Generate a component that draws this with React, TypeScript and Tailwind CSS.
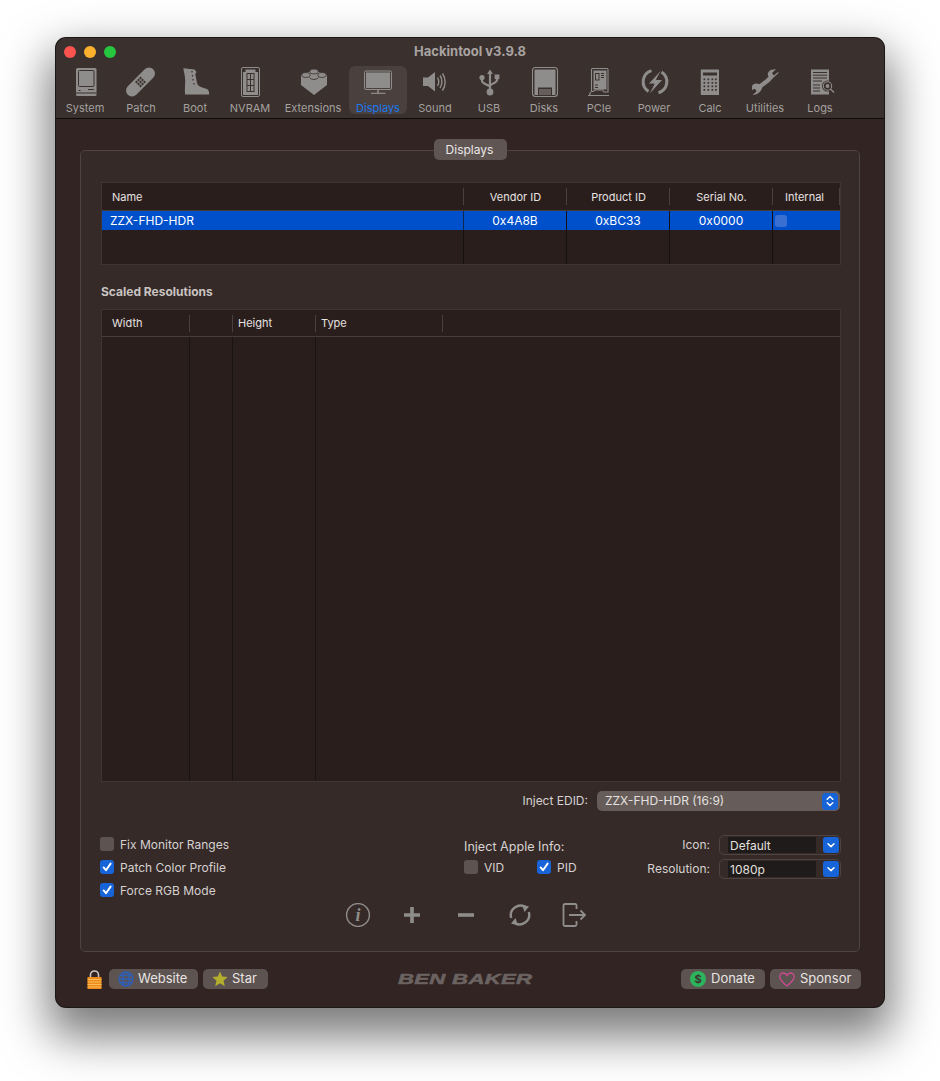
import React from "react";

const G = "#8f8d8c";
const D = "#3a302e";

function Ico({ cx, children }: { cx: number; children: React.ReactNode }) {
  return (
    <svg width="48" height="36" viewBox={`${cx - 24} 66 48 36`} className="block shrink-0" fill={G}>
      {children}
    </svg>
  );
}

const icons: Record<string, React.ReactNode> = {
  System: (
    <>
      <rect x="76" y="68" width="20.5" height="28" rx="1.5" />
      <rect x="78.5" y="70.5" width="15.5" height="16" rx="1" fill={G} stroke={D} strokeWidth="1" />
      <rect x="76" y="92.5" width="20.5" height="1" fill={D} />
      <rect x="78.5" y="90" width="2" height="1" fill={D} />
      <rect x="88" y="89" width="6" height="1" fill={D} />
    </>
  ),
  Patch: (
    <>
      <rect x="122.5" y="76" width="36" height="12" rx="6" transform="rotate(-45 140.5 82)" />
      <g fill={D}>
        <rect x="139.5" y="77" width="2" height="2" transform="rotate(45 140.5 78)" />
        <rect x="139.5" y="81" width="2" height="2" transform="rotate(45 140.5 82)" />
        <rect x="139.5" y="85" width="2" height="2" transform="rotate(45 140.5 86)" />
        <rect x="135.5" y="81" width="2" height="2" transform="rotate(45 136.5 82)" />
        <rect x="143.5" y="81" width="2" height="2" transform="rotate(45 144.5 82)" />
        <rect x="137.5" y="79" width="2" height="2" transform="rotate(45 138.5 80)" />
        <rect x="141.5" y="79" width="2" height="2" transform="rotate(45 142.5 80)" />
        <rect x="137.5" y="83" width="2" height="2" transform="rotate(45 138.5 84)" />
        <rect x="141.5" y="83" width="2" height="2" transform="rotate(45 142.5 84)" />
      </g>
    </>
  ),
  Boot: (
    <>
      <path d="M183.3 68.3 L194.5 69.5 L196.5 72 L195.3 74 L197 83 C198 87 203 87.5 207 89 C208.8 90 209.2 92 209.2 94.5 L185 94.5 C184.6 88 185.4 84 185.2 80 C185 75 183.8 72 183.3 68.3Z" />
      <path d="M192 71 V72.5 M192.5 75 V76.5 M193 79 V80.5 M194 83 V84.5" stroke={D} strokeWidth="1.2" fill="none" />
    </>
  ),
  NVRAM: (
    <>
      <rect x="241.5" y="67.5" width="18" height="29" rx="1.5" fill="none" stroke={G} strokeWidth="1" />
      <path d="M243 72 L245.5 72 L245.5 69.5 L255.5 69.5 L255.5 72 L258 72 L258 95 L243 95Z" />
      <rect x="246.5" y="73" width="8" height="19" fill={D} />
      <rect x="247.5" y="74" width="2.5" height="5" />
      <rect x="251" y="74" width="2.5" height="5" />
      <rect x="247.5" y="80" width="2.5" height="5" />
      <rect x="251" y="80" width="2.5" height="5" />
      <rect x="247.5" y="86" width="2.5" height="5" />
      <rect x="251" y="86" width="2.5" height="5" />
    </>
  ),
  Extensions: (
    <>
      <path d="M301 75 L314 70 L327 75 V85 L314 95 L301 85Z" />
      <g stroke={D} strokeWidth="0.8">
        <ellipse cx="314" cy="71.5" rx="4.2" ry="2.4" />
        <ellipse cx="306" cy="75" rx="4.2" ry="2.4" />
        <ellipse cx="322" cy="75" rx="4.2" ry="2.4" />
      </g>
      <path d="M309.5 77.5 C311 80 317 80 318.5 77.5" fill="none" stroke={D} strokeWidth="0.9" />
    </>
  ),
  Displays: (
    <>
      <rect x="364.5" y="71" width="27" height="18.5" rx="1.5" fill="none" stroke={G} strokeWidth="1" />
      <rect x="366" y="72.5" width="24" height="15.5" />
      <rect x="377.3" y="89.5" width="1.6" height="4" />
      <rect x="371" y="92.7" width="14.5" height="1.2" />
    </>
  ),
  Sound: (
    <>
      <path d="M423 77.5 H428 L435 72 V91.5 L428 86 H423Z" />
      <g fill="none" stroke={G} strokeWidth="1.4">
        <path d="M437.5 77.5 C439 80 439 83.5 437.5 86" />
        <path d="M440 75.5 C442.5 79 442.5 84.5 440 88" />
        <path d="M442.5 73.5 C446 78.5 446 85.5 442.5 90.5" />
      </g>
    </>
  ),
  USB: (
    <>
      <path d="M490 72 V90 M482 79 V81 C482 84 490 85 490 87 M497 78 V80 C497 83 490 84 490 86" fill="none" stroke={G} strokeWidth="2.2" />
      <path d="M490 69.5 L493 74 H487Z" />
      <circle cx="482" cy="77.5" r="2.6" />
      <rect x="494.6" y="74.5" width="4.8" height="4.6" />
      <circle cx="490" cy="92" r="3.4" />
    </>
  ),
  Disks: (
    <>
      <rect x="532.5" y="67.5" width="25" height="29" rx="3" fill="none" stroke={G} strokeWidth="1.1" />
      <path d="M534.5 70.5 Q534.5 69.5 535.5 69.5 H554.5 Q555.5 69.5 555.5 70.5 V95 H534.5Z" />
      <rect x="538" y="87.5" width="14" height="7.5" fill={D} />
      <path d="M540 89 V95 M542 89 V95 M544 89 V95 M546 89 V95 M548 89 V95 M550 89 V95" stroke={G} strokeWidth="1" fill="none" />
    </>
  ),
  PCIe: (
    <>
      <path d="M592.5 68.5 H607 Q608 68.5 608 69.5 V92 H604 L602.5 90 H595 L593 91.5 H591.5 V69.5 Q591.5 68.5 592.5 68.5Z" fill="none" stroke={G} strokeWidth="1.1" />
      <rect x="593.5" y="70.5" width="13" height="19" />
      <rect x="595" y="73" width="4.5" height="7.5" fill={D} />
      <rect x="596" y="74" width="2.5" height="5.5" />
      <path d="M601 73.5 H604 M601 75.5 H604 M601 77.5 H604 M595 85 H598 M595 87.5 H598" stroke={D} strokeWidth="1" fill="none" />
      <path d="M588 95.5 H609" stroke={G} strokeWidth="1.2" fill="none" />
      <path d="M590.5 92 L589.5 95.5" stroke={G} strokeWidth="1.2" fill="none" />
    </>
  ),
  Power: (
    <>
      <path d="M651.5 70.6 A11.6 11.6 0 0 0 648.5 91.5 M658.5 92.8 A11.6 11.6 0 0 0 661.5 71.9" fill="none" stroke={G} strokeWidth="3" />
      <path d="M662.5 68.5 L648 84 H654 L648.5 95.5 L663 79.5 H656.5Z" stroke={D} strokeWidth="1" />
    </>
  ),
  Calc: (
    <>
      <rect x="700.8" y="69.5" width="18.2" height="25.5" rx="0.5" />
      <rect x="703" y="72.5" width="14" height="3" fill={D} />
      <g fill={D}>
        {[78.5, 82, 85.5, 89].map((y) =>
          [703.5, 707.5, 711.5, 715].map((x) => <rect key={`${x}-${y}`} x={x} y={y} width="1.7" height="1.7" />)
        )}
      </g>
    </>
  ),
  Utilities: (
    <>
      <path d="M756 90 C761 84 766 84 771 77" fill="none" stroke={G} strokeWidth="4.4" />
      <path d="M778.6 73 L772.5 78.5 L768 76 C767 72 770 69 776 69.3 L772 73 L773.8 75.6 L778 72Z" />
      <path d="M752 86 C754 83 757 83 760 84.5 L762 88 C761 92 757 95 752.5 95 L756.5 91.5 L755.5 88.5 L752 90Z" />
    </>
  ),
  Logs: (
    <>
      <rect x="811" y="69.5" width="18" height="25" />
      <path d="M813 72.5 H827 M813 75.2 H827 M813 78 H827 M813 81 H822 M813 85 H820 M813 88 H820 M813 91 H820" stroke={D} strokeWidth="1" fill="none" />
      <circle cx="827.5" cy="86" r="5.5" fill={D} />
      <circle cx="827.5" cy="86" r="4.2" fill="none" stroke={G} strokeWidth="1.1" />
      <circle cx="827.5" cy="86" r="1.9" />
      <path d="M830.7 89.2 L834 92.5" stroke={G} strokeWidth="1.4" fill="none" />
    </>
  ),
};

const toolbar: [string, number, number][] = [
  ["System", 85, 54],
  ["Patch", 141, 58],
  ["Boot", 195, 50],
  ["NVRAM", 250, 60],
  ["Extensions", 313, 66],
  ["Displays", 378, 58],
  ["Sound", 435, 56],
  ["USB", 489, 52],
  ["Disks", 544, 58],
  ["PCIe", 599, 52],
  ["Power", 654, 58],
  ["Calc", 710, 54],
  ["Utilities", 765, 56],
  ["Logs", 820, 54],
];

function Check({ on }: { on?: boolean }) {
  return (
    <span className={`flex h-[14px] w-[14px] shrink-0 items-center justify-center rounded-[3px] ${on ? "bg-[#1763d8]" : "bg-[#5d5452]"}`}>
      {on && (
        <svg width="12" height="12" viewBox="0 0 12 12" fill="none">
          <path d="M2.6 6.4 L5 9.2 L9.6 2.6" stroke="#fff" strokeWidth="1.9" strokeLinecap="round" strokeLinejoin="round" />
        </svg>
      )}
    </span>
  );
}

function CheckRow({ label, on }: { label: string; on?: boolean }) {
  return (
    <div className="flex h-[14px] items-center gap-[6px]">
      <Check on={on} />
      <span className="pt-[2px] text-[12px] leading-none text-[#d6d1d0]">{label}</span>
    </div>
  );
}

function Combo({ label, value }: { label: string; value: string }) {
  return (
    <div className="flex h-[20px] items-center justify-end">
      <span className="mr-[9px] text-[12px] text-[#d6d1d0]">{label}</span>
      <div className="flex h-[20px] w-[122px] items-center rounded-[5px] border border-[#4d4341] pl-[8px] pr-[1px]">
        <div className="flex h-[16px] w-[88px] items-center bg-[#1e1b1a] pl-[2px] pt-[1px] text-[12px] text-[#e4e0df]">{value}</div>
        <div className="ml-[7px] flex h-[16px] w-[16px] items-center justify-center rounded-[3px] bg-[#1763d8]">
          <svg width="10" height="10" viewBox="0 0 10 10" fill="none">
            <path d="M2 3.8 L5 6.6 L8 3.8" stroke="#fff" strokeWidth="1.5" strokeLinecap="round" strokeLinejoin="round" />
          </svg>
        </div>
      </div>
    </div>
  );
}

function Head({ w, children, left, noSep }: { w: string; children?: React.ReactNode; left?: boolean; noSep?: boolean }) {
  return (
    <div className={`relative flex h-full shrink-0 items-center ${w} ${left ? "pl-[10px]" : "justify-center"} text-[11px] text-[#e6e2e1]`}>
      {children}
      {!noSep && <span className="absolute right-0 top-[5px] h-[17px] w-px bg-[#4a403e]" />}
    </div>
  );
}

function Cell({ w, children }: { w: string; children?: React.ReactNode }) {
  return <div className={`flex h-full shrink-0 items-center justify-center border-r border-[#141110] ${w} text-[12px] text-white`}>{children}</div>;
}

function Pill({ w, icon, label, tight }: { w: string; icon: React.ReactNode; label: string; tight?: boolean }) {
  return (
    <button className={`flex h-[20px] ${w} items-center rounded-[5px] bg-[#5d5351] pl-[9px] text-[13px] text-[#e8e4e3]`}>
      <span className={`${tight ? "mr-[4px]" : "mr-[5px]"} flex h-[16px] w-[16px] items-center justify-center`}>{icon}</span>
      {label}
    </button>
  );
}

export default function App() {
  return (
    <div className="h-[1081px] overflow-hidden bg-white pl-[56px] pt-[38px] font-[Inter,sans-serif]">
      <div className="h-[969px] w-[828px] overflow-hidden rounded-[10px] bg-[#312422] shadow-[0_0_0_1px_#1a1716,0_22px_46px_8px_rgba(0,0,0,0.52)]">
        <div className="h-[81px] border-b border-[#0c0a0a] bg-[#3a302e]">
          <div className="relative flex h-[28px] items-center justify-center">
            <div className="absolute left-[8px] top-[8px] flex gap-[8px]">
              <span className="h-[12px] w-[12px] rounded-full bg-[#fb544f]" />
              <span className="h-[12px] w-[12px] rounded-full bg-[#fcb12e]" />
              <span className="h-[12px] w-[12px] rounded-full bg-[#27c63f]" />
            </div>
            <span className="text-[13px] font-bold text-[#a8a3a1]">Hackintool v3.9.8</span>
          </div>
          <div className="flex h-[52px] pl-[2px]">
            {toolbar.map(([name, cx, w]) => {
              const active = name === "Displays";
              return (
                <div
                  key={name}
                  style={{ width: w }}
                  className={`flex h-[48px] shrink-0 flex-col items-center overflow-visible ${active ? "ml-[3px] rounded-[6px] bg-[#4a403e]" : ""}`}
                >
                  <Ico cx={cx}>{icons[name]}</Ico>
                  <span className={`whitespace-nowrap text-[11px] leading-[13px] ${active ? "text-[#1a78f2]" : "text-[#a3a09e]"}`}>{name}</span>
                </div>
              );
            })}
          </div>
        </div>

        <div className="relative ml-[24px] mt-[31px] h-[802px] w-[780px] rounded-[5px] border border-[#4e4442] bg-[#352a28] pl-[20px] pr-[18px] pt-[31px]">
          <div className="absolute left-[353px] top-[-12px] flex h-[21px] w-[73px] items-center justify-center rounded-[5px] bg-[#5f5553] pr-[2px] text-[12px] text-[#ebe7e6]">Displays</div>

          <div className="h-[83px] border border-[#3f3533] bg-[#2a1e1c]">
            <div className="flex h-[28px] border-b border-[#463c3a]">
              <Head w="w-[362px] pt-[2px]" left>Name</Head>
              <Head w="w-[103px] pt-[2px]">Vendor ID</Head>
              <Head w="w-[103px] pt-[2px]">Product ID</Head>
              <Head w="w-[103px] pt-[2px]">Serial No.</Head>
              <Head w="w-[67px] pt-[2px] pr-[4px]">Internal</Head>
            </div>
            <div className="flex h-[19px] bg-[#0050cc]">
              <div className="flex h-full w-[362px] shrink-0 items-center border-r border-[#10284f] pl-[8px] text-[12px] text-white">ZZX-FHD-HDR</div>
              <Cell w="w-[103px] border-[#10284f]">0x4A8B</Cell>
              <Cell w="w-[103px] border-[#10284f]">0xBC33</Cell>
              <Cell w="w-[103px] border-[#10284f]">0x0000</Cell>
              <div className="flex h-full items-center pl-[2px]">
                <span className="h-[12px] w-[12px] rounded-[3px] bg-[#3a6fd2]" />
              </div>
            </div>
            <div className="flex h-[34px]">
              <div className="w-[362px] shrink-0 border-r border-[#141110]" />
              <Cell w="w-[103px]" />
              <Cell w="w-[103px]" />
              <Cell w="w-[103px]" />
            </div>
          </div>

          <div className="mt-[19px] h-[16px] text-[12px] font-bold leading-[16px] text-[#c9c4c2]">Scaled Resolutions</div>

          <div className="mt-[9px] h-[473px] border border-[#3f3533] bg-[#2a1e1c]">
            <div className="flex h-[27px] border-b border-[#463c3a]">
              <Head w="w-[88px]" left>Width</Head>
              <Head w="w-[43px]" />
              <Head w="w-[83px]" left><span className="-ml-[5px]">Height</span></Head>
              <Head w="w-[127px]" left><span className="-ml-[5px]">Type</span></Head>
            </div>
            <div className="flex h-[444px]">
              <div className="w-[88px] border-r border-[#191413]" />
              <div className="w-[43px] border-r border-[#191413]" />
              <div className="w-[83px] border-r border-[#191413]" />
            </div>
          </div>

          <div className="mt-[9px] flex h-[20px] items-center justify-end pr-[1px]">
            <span className="mr-[9px] text-[12px] text-[#d6d1d0]">Inject EDID:</span>
            <div className="flex h-[20px] w-[243px] items-center justify-between rounded-[5px] bg-[#665c5a] pl-[8px] pr-[2px] text-[12px] text-[#e4e0df]">
              ZZX-FHD-HDR (16:9)
              <span className="flex h-[17px] w-[16px] items-center justify-center rounded-[4px] bg-[#1763d8]">
                <svg width="10" height="14" viewBox="0 0 10 14" fill="none">
                  <path d="M2.2 5.2 L5 2.6 L7.8 5.2 M2.2 8.8 L5 11.4 L7.8 8.8" stroke="#fff" strokeWidth="1.4" strokeLinecap="round" strokeLinejoin="round" />
                </svg>
              </span>
            </div>
          </div>

          <div className="mt-[24px] flex h-[64px]">
            <div className="-ml-[1px] flex w-[364px] shrink-0 flex-col gap-[9px] pt-[2px]">
              <CheckRow label="Fix Monitor Ranges" />
              <CheckRow label="Patch Color Profile" on />
              <CheckRow label="Force RGB Mode" on />
            </div>
            <div className="w-[130px] shrink-0">
              <div className="h-[25px] pt-[4px] text-[12.6px] leading-[16px] text-[#d6d1d0]">Inject Apple Info:</div>
              <div className="flex">
                <div className="w-[73px]"><CheckRow label="VID" /></div>
                <CheckRow label="PID" on />
              </div>
            </div>
            <div className="flex flex-1 flex-col gap-[4px]">
              <Combo label="Icon:" value="Default" />
              <Combo label="Resolution:" value="1080p" />
            </div>
          </div>

          <div className="mt-[4px] flex h-[24px] items-center gap-[24px] pl-[242px]">
            <svg width="30" height="24" viewBox="0 0 30 24" fill="none">
              <circle cx="15" cy="12" r="11.4" stroke={G} strokeWidth="1.4" />
              <text x="15" y="18" textAnchor="middle" fontFamily="Liberation Serif" fontStyle="italic" fontWeight="700" fontSize="18" fill={G}>i</text>
            </svg>
            <svg width="30" height="24" viewBox="0 0 30 24" fill="none">
              <path d="M15 4 V20 M7 12 H23" stroke={G} strokeWidth="3.6" />
            </svg>
            <svg width="30" height="24" viewBox="0 0 30 24" fill="none">
              <path d="M7 12 H23" stroke={G} strokeWidth="3.6" />
            </svg>
            <svg width="30" height="24" viewBox="0 0 30 24" fill="none">
              <path d="M6.2 15 A9.6 9.6 0 0 1 21 4.5" stroke={G} strokeWidth="2.4" />
              <path d="M23.8 9 A9.6 9.6 0 0 1 9 19.5" stroke={G} strokeWidth="2.4" />
              <path d="M17 1.5 L24 3.5 L19.5 9Z M13 22.5 L6 20.5 L10.5 15Z" fill={G} />
            </svg>
            <svg width="30" height="24" viewBox="-1 0 30 24" fill="none">
              <path d="M16.5 6 V2.5 Q16.5 1 15 1 H5 Q3.5 1 3.5 2.5 V21.5 Q3.5 23 5 23 H15 Q16.5 23 16.5 21.5 V18" stroke={G} strokeWidth="1.8" />
              <path d="M9 12 H25 M20.5 7.5 L25 12 L20.5 16.5" stroke={G} strokeWidth="1.8" />
            </svg>
          </div>
        </div>

        <div className="mt-[17px] flex h-[20px] items-center pl-[31px] pr-[23px]">
          <svg width="15" height="19" viewBox="0 0 15 19" className="mr-[7px] shrink-0">
            <path d="M3.5 8 V5 A4 4 0 0 1 11.5 5 V8" fill="none" stroke="#c9c6c4" strokeWidth="1.6" />
            <rect x="0.5" y="7" width="14" height="12" fill="#f08a1c" />
            <path d="M0.5 9.5 H14.5 M0.5 12 H14.5 M0.5 14.5 H14.5 M0.5 17 H14.5" stroke="#f6bd55" strokeWidth="1" />
          </svg>
          <Pill
            w="w-[89px]"
            label="Website"
            tight
            icon={
              <svg width="16" height="16" viewBox="0 0 16 16" fill="none" stroke="#2f5fb8" strokeWidth="1.3">
                <circle cx="8" cy="8" r="7" />
                <ellipse cx="8" cy="8" rx="3.2" ry="7" />
                <path d="M1 8 H15 M2 4.5 H14 M2 11.5 H14" />
              </svg>
            }
          />
          <div className="w-[5px]" />
          <Pill
            w="w-[65px]"
            label="Star"
            tight
            icon={
              <svg width="16" height="16" viewBox="0 0 16 16" fill="#b4ae2e">
                <path d="M8 .5 L10.2 5.6 L15.7 6.1 L11.5 9.7 L12.8 15.2 L8 12.3 L3.2 15.2 L4.5 9.7 L.3 6.1 L5.8 5.6Z" />
              </svg>
            }
          />
          <div className="ml-[130px] w-[132px] shrink-0 origin-left scale-x-[1.58] whitespace-nowrap text-[14px] font-black italic leading-none tracking-[0.2px] text-[#6b6361] [font-family:'Liberation_Sans',sans-serif] [-webkit-text-stroke:0.5px_#6b6361]">BEN BAKER</div>
          <div className="ml-auto" />
          <Pill
            w="w-[84px]"
            label="Donate"
            icon={
              <span className="flex h-[16px] w-[16px] items-center justify-center rounded-full bg-[#2db35c] text-[11px] font-bold leading-none text-[#3a302e]">$</span>
            }
          />
          <div className="w-[5px]" />
          <Pill
            w="w-[91px]"
            label="Sponsor"
            icon={
              <svg width="16" height="15" viewBox="0 0 16 15" fill="none" stroke="#cf4a92" strokeWidth="1.3">
                <path d="M8 14 C3 10 .8 7.6 .8 4.8 C.8 2.4 2.6 1 4.4 1 C6 1 7.2 1.9 8 3.4 C8.8 1.9 10 1 11.6 1 C13.4 1 15.2 2.4 15.2 4.8 C15.2 7.6 13 10 8 14Z" />
              </svg>
            }
          />
        </div>
      </div>
    </div>
  );
}
